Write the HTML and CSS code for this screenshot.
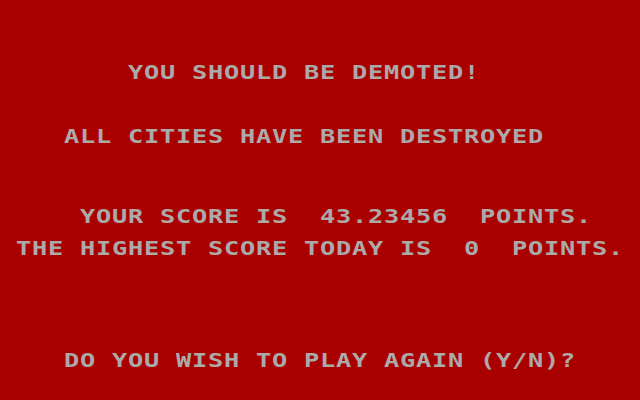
FILE: index.html
```html
<!DOCTYPE html>
<html>
<head>
  <meta charset="UTF-8" />
  <title>Missile Command – Game Over</title>
  <link rel="stylesheet" href="styles.css">
</head>
<body>

<!-- 40 x 25 text screen, one 16px row per line -->
<div class="screen">
  <div class="row"></div>
  <div class="row"></div>
  <div class="row"></div>
  <div class="row"></div>
  <div class="row">        YOU SHOULD BE DEMOTED!</div>
  <div class="row"></div>
  <div class="row"></div>
  <div class="row"></div>
  <div class="row">    ALL CITIES HAVE BEEN DESTROYED</div>
  <div class="row"></div>
  <div class="row"></div>
  <div class="row"></div>
  <div class="row"></div>
  <div class="row">     YOUR SCORE IS  43.23456  POINTS.</div>
  <div class="row"></div>
  <div class="row"> THE HIGHEST SCORE TODAY IS  0  POINTS.</div>
  <div class="row"></div>
  <div class="row"></div>
  <div class="row"></div>
  <div class="row"></div>
  <div class="row"></div>
  <div class="row"></div>
  <div class="row">    DO YOU WISH TO PLAY AGAIN (Y/N)?</div>
</div>

</body>
</html>
```

FILE: styles.css
```css
html, body {
  margin: 0;
  padding: 0;
  background-color: #AA0000;
}
body {
  width: 640px;
  height: 400px;
  overflow: hidden;
}
.screen {
  width: 480px;
  color: #AAAAAA;
  font-family: 'DejaVu Sans Mono', 'Liberation Mono', monospace;
  font-weight: bold;
  font-size: 19px;
  letter-spacing: 0.56px;    /* 11.44 + 0.56 = 12px cell */
  transform: scaleX(1.3333); /* widen cells to 16px, 40 columns */
  transform-origin: 0 0;
}
.row {
  height: 16px;
  line-height: 16px;
  white-space: pre;
}
```
